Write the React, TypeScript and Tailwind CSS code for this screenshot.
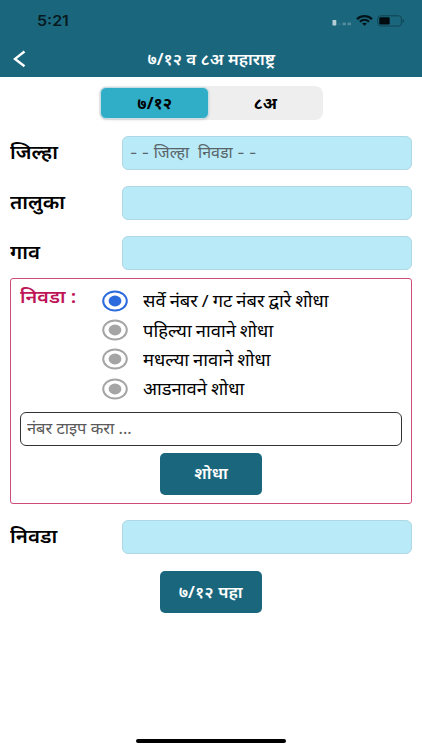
import { ReactNode } from "react";
import clsx from "clsx";

const searchOptions = [
  "सर्वे नंबर / गट नंबर द्वारे शोधा",
  "पहिल्या नावाने शोधा",
  "मधल्या नावाने शोधा",
  "आडनावने शोधा",
];

function StatusBar() {
  return (
    <div className="flex h-[41px] items-center pl-[37px] pr-[17px]">
      <span className="origin-left scale-x-[1.14] font-['Inter'] text-[14px] font-semibold leading-none text-[#061a20]">
        5:21
      </span>
      <div className="ml-auto flex items-center">
        {/* Signal */}
        <svg width="20" height="8" viewBox="0 0 20 8" className="mt-1">
          <rect x="0.5" y="1" width="3.8" height="5.6" rx="0.6" fill="#b5ced6" />
          <rect x="6" y="4" width="3" height="2.4" rx="0.6" fill="#2c7085" />
          <rect x="10.5" y="3.5" width="3.5" height="2.8" rx="0.6" fill="#528a9a" />
          <rect x="15.5" y="3.5" width="3.5" height="2.8" rx="0.6" fill="#528a9a" />
        </svg>
        {/* Wifi */}
        <svg width="17" height="11" viewBox="0 0 17 11" className="ml-1" fill="none" stroke="#03151b" strokeWidth="2.2">
          <path d="M1 4.2C5.2 0.2 11.8 0.2 16 4.2" />
          <path d="M3.9 6.8C6.6 4.3 10.4 4.3 13.1 6.8" />
          <path d="M6 8.5Q8.5 6.8 11 8.5L8.5 10.7Z" fill="#03151b" stroke="none" />
        </svg>
        {/* Battery */}
        <svg width="28" height="12" viewBox="0 0 28 12" className="ml-1">
          <rect x="0.8" y="0.8" width="23.6" height="10.2" rx="2.8" fill="none" stroke="#104452" strokeWidth="1" />
          <rect x="2.3" y="2.3" width="10.4" height="7.2" rx="1.2" fill="#010b0f" />
          <path d="M25.7 4.1Q27.2 4.8 27.2 6Q27.2 7.2 25.7 7.8Z" fill="#104452" />
        </svg>
      </div>
    </div>
  );
}

function Header() {
  return (
    <header className="h-[77px] bg-[#1a677d]">
      <StatusBar />
      <div className="grid h-9 grid-cols-[40px_1fr_40px] items-center">
        <svg width="14" height="18" viewBox="0 0 14 18" className="ml-[12px]" fill="none" stroke="white" strokeWidth="2.4">
          <path d="M12.5 1.5L3 8.9L12.5 16.3" />
        </svg>
        <h1 className="text-center text-[16.5px] font-semibold leading-none text-white">
          <span className="inline-block scale-x-[1.025]">७/१२ व ८अ महाराष्ट्र</span>
        </h1>
      </div>
    </header>
  );
}

function Tabs() {
  return (
    <div className="mx-auto flex h-[34px] w-[224px] rounded-lg bg-[#eeeeee] p-px text-[16px] font-bold">
      <button className="flex h-8 w-[109px] items-center justify-center rounded-md border border-[#c9dfe5] bg-[#30aec8] shadow-sm">
        <span className="scale-x-[1.04]">७/१२</span>
      </button>
      <button className="flex flex-1 items-center justify-center">
        <span className="scale-x-[1.04]">८अ</span>
      </button>
    </div>
  );
}

function Field({ label, value }: { label: string; value?: string }) {
  return (
    <div className="flex h-[34px] items-center">
      <div className="w-28 pb-px text-[19px] font-semibold leading-none">
        <span className="inline-block origin-left scale-x-[1.08]">{label}</span>
      </div>
      <div className="flex h-full flex-1 items-center rounded-md border border-[#b0d8e4] bg-[#b8eaf7] pl-[7px] text-[15.5px] leading-none text-[#596468]">
        <span className="origin-left scale-x-[1.03] whitespace-pre font-['Inter','Noto_Sans',sans-serif]">
          {value}
        </span>
      </div>
    </div>
  );
}

function Radio({ checked }: { checked: boolean }) {
  return (
    <svg
      width="26"
      height="22"
      viewBox="0 0 26 22"
      className={clsx("shrink-0", checked ? "text-[#2b6bdd]" : "text-[#a5a5a5]")}
    >
      <ellipse cx="13" cy="11" rx="11.8" ry="9.6" fill="none" stroke="currentColor" strokeWidth="2" />
      <ellipse cx="13" cy="11" rx="6.4" ry="5.4" fill="currentColor" />
    </svg>
  );
}

function ActionButton({ children }: { children: ReactNode }) {
  return (
    <button className="mx-auto flex h-[42px] w-[102px] items-center justify-center rounded-[5px] bg-[#1a677d] text-[16.5px] font-semibold leading-none text-white">
      <span className="scale-x-[1.04]">{children}</span>
    </button>
  );
}

function SearchPanel() {
  return (
    <section className="mt-2 h-[226px] rounded-[3px] border border-[#cc4c7c] px-[9px]">
      <div className="flex">
        <div className="w-[82px] pt-[8px] text-[18px] font-semibold leading-none text-[#be1558]">
          <span className="inline-block origin-left scale-x-[1.1]">निवडा :</span>
        </div>
        <div className="pt-[7px]">
          {searchOptions.map((option, i) => (
            <div key={option} className="flex h-[29.4px] items-center gap-[15px]">
              <Radio checked={i === 0} />
              <span className="origin-left scale-x-[1.08] whitespace-nowrap text-[17px] leading-none [word-spacing:-0.7px]">
                {option}
              </span>
            </div>
          ))}
        </div>
      </div>
      <div className="mt-2 flex h-[34px] items-center rounded-md border border-[#333333] pl-[6px] text-[15.5px] leading-none text-[#5a5a5a]">
        <span className="origin-left scale-x-[1.06]">नंबर टाइप करा ...</span>
      </div>
      <div className="mt-[7px]">
        <ActionButton>शोधा</ActionButton>
      </div>
    </section>
  );
}

export default function App() {
  return (
    <div className="flex h-[750px] w-[422px] flex-col overflow-hidden bg-white font-['Noto_Sans','Noto_Sans_Devanagari',sans-serif] text-black">
      <Header />
      <main className="flex-1 px-[10px] pt-[9px]">
        <Tabs />
        <div className="mt-4 flex flex-col gap-4">
          <Field label="जिल्हा" value="- - जिल्हा  निवडा - -" />
          <Field label="तालुका" />
          <Field label="गाव" />
        </div>
        <SearchPanel />
        <div className="mt-4">
          <Field label="निवडा" />
        </div>
        <div className="mt-[17px]">
          <ActionButton>७/१२ पहा</ActionButton>
        </div>
      </main>
      <div className="mx-auto mb-[7px] h-1 w-[150px] rounded-full bg-black" />
    </div>
  );
}
